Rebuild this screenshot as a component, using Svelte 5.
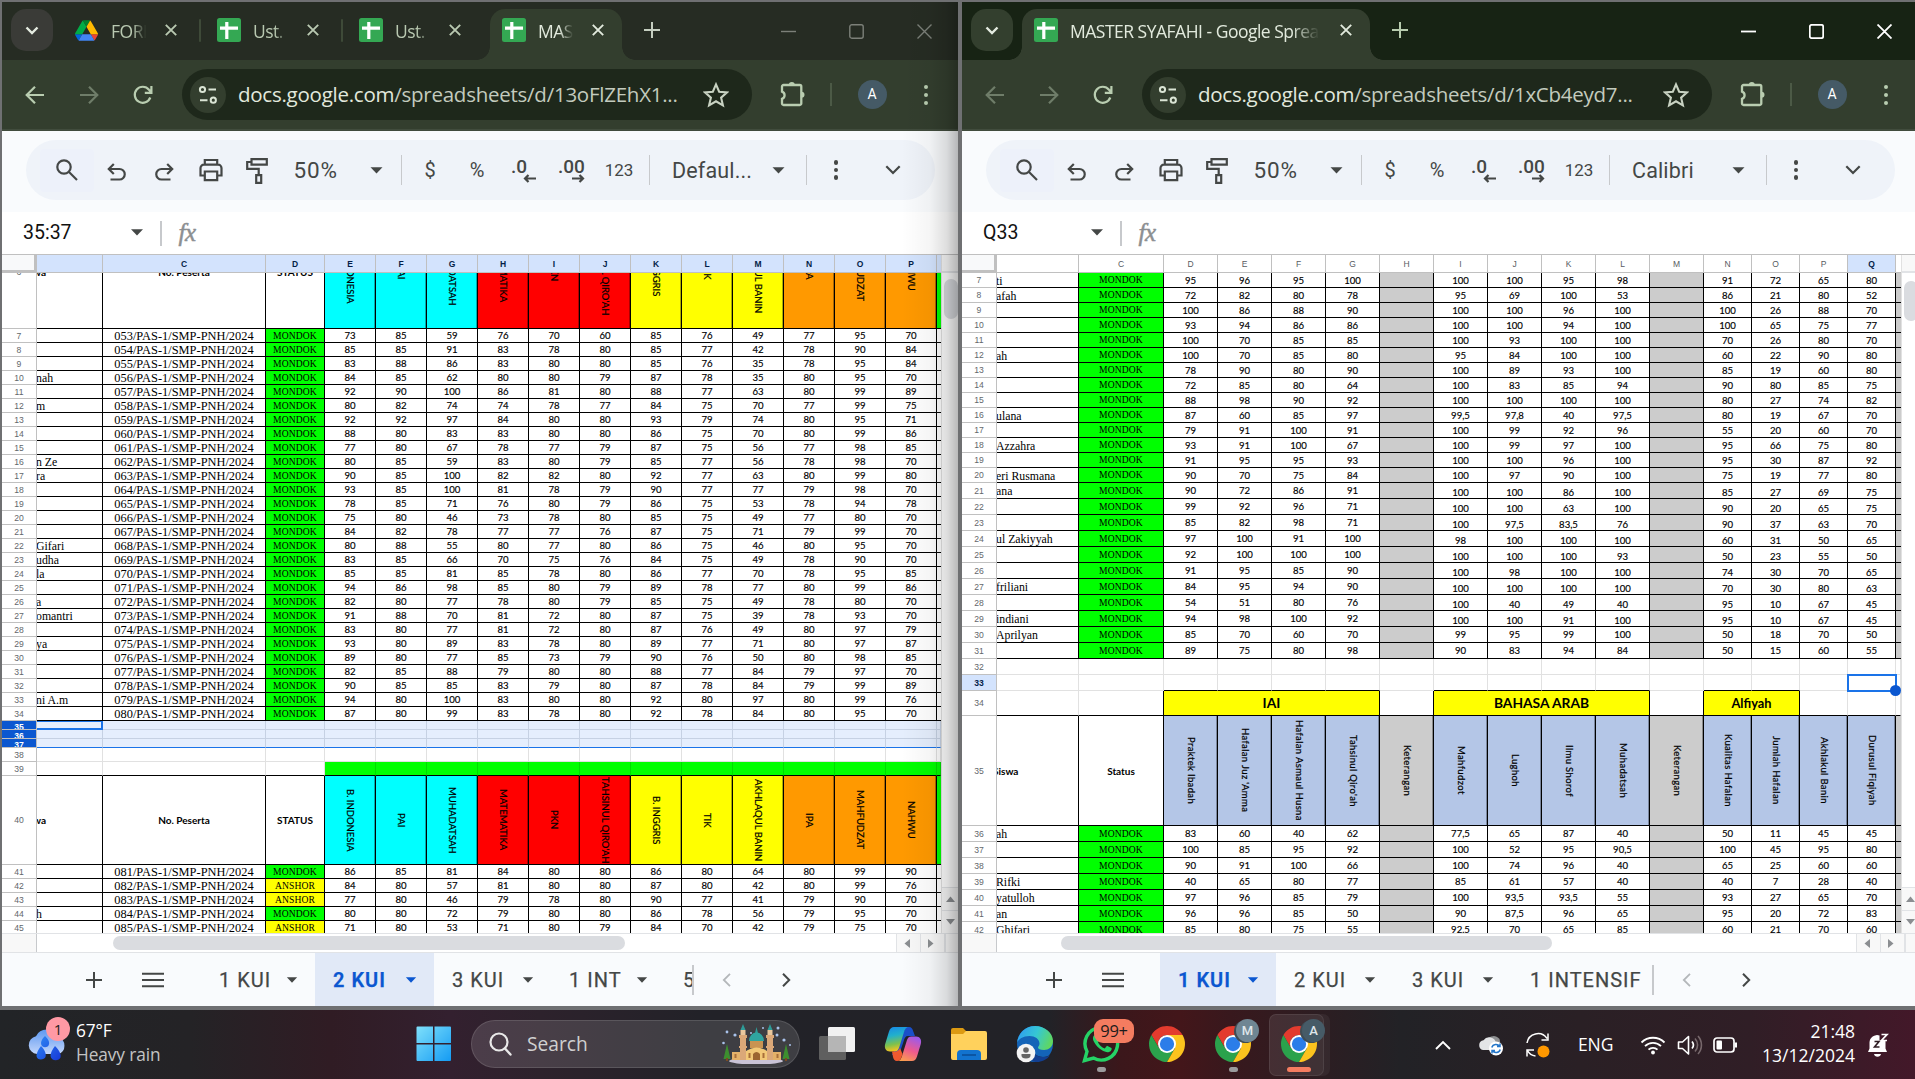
<script>
  const nums = (s) => s.trim().split(/\s+/);

  // Left spreadsheet: first row number, name tail, scores in columns E..P
  const leftRaw = `
7||73 85 59 76 70 60 85 76 49 77 95 70
8||85 85 91 83 78 80 85 77 42 78 90 84
9||83 88 86 83 80 80 85 76 35 78 95 84
10|nah|84 85 62 80 80 79 87 78 35 80 95 70
11||92 90 100 86 81 80 88 77 63 80 99 89
12|m|80 82 74 74 78 77 84 75 70 77 99 75
13||92 92 97 84 80 80 93 79 74 80 95 71
14||88 80 83 83 80 80 86 75 70 80 99 86
15||77 80 67 78 77 79 87 75 56 77 98 85
16|n Ze|80 85 59 83 80 79 85 77 56 78 98 70
17|ra|90 85 100 82 82 80 92 77 63 80 99 80
18||93 85 100 81 78 79 90 77 77 79 98 70
19||78 85 71 76 80 79 86 75 53 78 94 78
20||75 80 46 73 78 80 85 75 49 77 80 70
21||84 82 78 77 77 76 87 75 71 79 99 70
22|Gifari|80 88 55 80 77 80 86 75 46 80 95 70
23|udha|83 85 66 70 75 76 84 75 49 78 90 70
24|la|85 85 81 85 78 80 86 77 70 78 95 85
25||94 86 98 85 80 79 89 78 77 80 99 86
26|a|82 80 77 78 80 79 85 75 49 78 80 70
27|omantri|91 88 70 81 72 80 87 75 39 78 93 70
28||83 80 77 81 72 80 87 76 49 80 97 79
29|ya|93 80 89 83 78 80 89 77 71 80 97 87
30||89 80 77 85 73 79 90 76 50 80 98 85
31||82 85 88 79 80 80 88 77 84 79 97 70
32||90 85 85 83 79 80 87 78 84 79 99 89
33|ni A.m|94 80 100 83 80 80 92 80 97 80 99 76
34||87 80 99 83 78 80 92 78 84 80 95 70
41||86 85 81 84 80 80 86 80 64 80 99 90
42||84 80 57 81 80 80 87 80 42 80 99 76
43||77 80 46 79 78 80 90 77 41 79 90 70
44|h|80 80 72 79 80 80 86 78 56 79 95 70
45||71 80 53 71 80 79 84 70 42 79 75 70`;
  const left = leftRaw.trim().split('\n').map((l, i) => {
    const [n, name, v] = l.split('|');
    return {
      n: +n, name,
      id: `${String(53 + i).padStart(3, '0')}/PAS-1/SMP-PNH/2024`,
      status: [42, 43, 45].includes(+n) ? 'ANSHOR' : 'MONDOK',
      v: nums(v)
    };
  });
  const leftA = left.filter((r) => r.n < 35);
  const leftB = left.filter((r) => r.n > 40);

  const subjects = [
    ['B. INDONESIA', 'cyan'], ['PAI', 'cyan'], ['MUHADATSAH', 'cyan'],
    ['MATEMATIKA', 'red'], ['PKN', 'red'], ["TAHSINUL QIRO'AH", 'red'],
    ['B. INGGRIS', 'yellow'], ['TIK', 'yellow'], ['AKHLAQUL BANIN', 'yellow'],
    ['IPA', 'orange'], ['MAHFUDZAT', 'orange'], ['NAHWU', 'orange']
  ];

  // Right spreadsheet: D..G, blank H, I..L, blank M, N..Q
  const rightRaw = `
7|ti|95 96 95 100 - 100 100 95 98 - 91 72 65 80
8|afah|72 82 80 78 - 95 69 100 53 - 86 21 80 52
9||100 86 88 90 - 100 100 96 100 - 100 26 88 70
10||93 94 86 86 - 100 100 94 100 - 100 65 75 77
11||100 70 85 85 - 100 93 100 100 - 70 26 80 70
12|ah|100 70 85 80 - 95 84 100 100 - 60 22 90 80
13||78 90 80 90 - 100 89 93 100 - 85 19 60 80
14||72 85 80 64 - 100 83 85 94 - 90 80 85 75
15||88 98 90 92 - 100 100 100 100 - 80 27 74 82
16|ulana|87 60 85 97 - 99,5 97,8 40 97,5 - 80 19 67 70
17||79 91 100 91 - 100 99 92 96 - 55 20 60 70
18|Azzahra|93 91 100 67 - 100 99 97 100 - 95 66 75 80
19||91 95 95 93 - 100 100 96 100 - 95 30 87 92
20|eri Rusmana|90 70 75 84 - 100 97 90 100 - 75 19 77 80
21|ana|90 72 86 91 - 100 100 86 100 - 85 27 69 75
22||99 92 96 71 - 100 100 63 100 - 90 20 65 75
23||85 82 98 71 - 100 97,5 83,5 76 - 90 37 63 70
24|ul Zakiyyah|97 100 91 100 - 98 100 100 100 - 60 31 50 65
25||92 100 100 100 - 100 100 100 93 - 50 23 55 50
26||91 95 85 90 - 100 98 100 100 - 74 30 70 65
27|friliani|84 95 94 90 - 100 100 100 100 - 70 30 80 63
28||54 51 80 76 - 100 40 49 40 - 95 10 67 45
29|indiani|94 98 100 92 - 100 100 91 100 - 95 10 67 45
30|Aprilyan|85 70 60 70 - 99 95 99 100 - 50 18 70 50
31||89 75 80 98 - 90 83 94 84 - 50 15 60 55
36|ah|83 60 40 62 - 77,5 65 87 40 - 50 11 45 45
37||100 85 95 92 - 100 52 95 90,5 - 100 45 95 80
38||90 91 100 66 - 100 74 96 40 - 65 25 60 60
39|Rifki|40 65 80 77 - 85 61 57 40 - 40 7 28 40
40|yatulloh|97 96 85 79 - 100 93,5 93,5 55 - 93 27 65 70
41|an|96 96 85 50 - 90 87,5 96 65 - 95 20 72 83
42|Ghifari|85 80 75 55 - 92,5 70 65 85 - 60 21 70 60`;
  const right = rightRaw.trim().split('\n').map((l) => {
    const [n, name, v] = l.split('|');
    return { n: +n, name, v: nums(v) };
  });
  const rightA = right.filter((r) => r.n < 32);
  const rightB = right.filter((r) => r.n > 35);
  const topics = ['Praktek Ibadah', "Hafalan Juz 'Amma", 'Hafalan Asmaul Husna', "Tahsinul Qiro'ah", 'Keterangan',
    'Mahfudzot', 'Lughoh', 'Ilmu Shorof', 'Muhadatsah', 'Keterangan',
    'Kualitas Hafalan', 'Jumlah Hafalan', 'Akhlakul Banin', 'Durusul Fiqiyah'];

  const leftCols = ['', ...'CDEFGHIJKLMNOP', ''];
  const rightCols = ['', ...'CDEFGHIJKLMNOPQ', ''];
</script>

{#snippet sheetsIcon()}
  <svg class="fav" viewBox="0 0 24 24"><rect width="24" height="24" rx="2.5" fill="#34a853" /><path d="M9.8 4v17M3 10.200h18" stroke="#fff" stroke-width="3.200" fill="none" /></svg>
{/snippet}

{#snippet cross()}
  <svg class="x" viewBox="0 0 12 12"><path d="M.8.8l10.400 10.400M11.200.8L.8 11.200" stroke="currentColor" stroke-width="1.900" fill="none" /></svg>
{/snippet}

{#snippet tab(title, active = false)}
  <div class="tab" class:active>
    {#if title.startsWith('FOR')}
      <svg class="fav drive" viewBox="0 0 87.3 78"><path d="m6.600 66.850 3.850 6.650c.8 1.400 1.950 2.500 3.300 3.300l13.750-23.800h-27.500c0 1.550.4 3.100 1.200 4.500z" fill="#0066da" /><path d="m43.650 25-13.750-23.800c-1.350.8-2.500 1.900-3.300 3.300l-25.400 44a9.060 9.060 0 0 0-1.200 4.500h27.500z" fill="#00ac47" /><path d="m73.550 76.800c1.350-.8 2.500-1.900 3.300-3.300l1.600-2.750 7.650-13.250c.8-1.400 1.200-2.950 1.200-4.500h-27.502l5.852 11.500z" fill="#ea4335" /><path d="m43.650 25 13.750-23.800c-1.350-.8-2.900-1.200-4.500-1.200h-18.500c-1.600 0-3.150.45-4.500 1.200z" fill="#00832d" /><path d="m59.800 53h-32.300l-13.750 23.800c1.350.8 2.900 1.200 4.500 1.200h50.800c1.600 0 3.150-.45 4.500-1.200z" fill="#4285f4" /><path d="m73.400 26.500-12.700-22c-.8-1.400-1.950-2.500-3.300-3.300l-13.750 23.800 16.150 28h27.450c0-1.550-.4-3.100-1.200-4.500z" fill="#ffba00" /></svg>
    {:else}
      {@render sheetsIcon()}
    {/if}
    <span class="title">{title}</span>
    {@render cross()}
  </div>
{/snippet}

{#snippet caret()}
  <svg class="caret" viewBox="0 0 12 7"><path d="M0 .3h12L6 6.600z" fill="currentColor" /></svg>
{/snippet}

{#snippet chromeBar(url, canBack)}
  <div class="nav">
    <span class="nb" class:dim={!canBack}><svg width="20" height="20" viewBox="0 0 20 20"><path d="M19 10H2M10 1.700L1.700 10l8.300 8.300" /></svg></span>
    <span class="nb dim"><svg width="20" height="20" viewBox="0 0 20 20"><path d="M1 10h17M10 1.700l8.300 8.300-8.300 8.300" /></svg></span>
    <span class="nb"><svg width="20" height="20" viewBox="0 0 20 20"><path d="M17.300 12.500A8 8 0 1 1 16 4.700L18 7M18.400 1v6.800h-6.600" /></svg></span>
    <div class="omni">
      <span class="site"><svg width="20" height="20" viewBox="0 0 20 20"><circle cx="4.500" cy="4.500" r="2.600" /><path d="M10.500 4.500H18M2 15.200h7.500" /><circle cx="15.300" cy="15.200" r="2.600" /></svg></span>
      <span class="url"><b>docs.google.com</b>{url}</span>
      <svg class="star" viewBox="0 0 24 24"><path d="M12 2.200l2.900 6.800 7.300.6-5.500 4.800 1.700 7.200L12 17.800l-6.400 3.800 1.700-7.200L1.800 9.600l7.300-.6z" /></svg>
    </div>
    <span class="ext"><svg width="27" height="27" viewBox="0 0 27 27"><path d="M3 6.500a1.500 1.500 0 0 1 1.500-1.500h16.300a1.500 1.500 0 0 1 1.500 1.500V23.500a1.500 1.500 0 0 1-1.500 1.500H4.500A1.500 1.500 0 0 1 3 23.500V18.800a3.800 3.800 0 0 0 0-7.200z" fill="none" stroke="currentColor" stroke-width="2.300" /><path d="M9.800 5a3 3 0 0 1 6 0zM22.500 11.800a3 3 0 0 1 0 6z" fill="currentColor" /></svg></span>
    <span class="nsep"><i></i></span>
    <span class="av"><i>A</i></span>
    <span class="kebab"><i></i><i></i><i></i></span>
  </div>
{/snippet}

{#snippet toolbar(font, cellRef)}
  <div class="tools">
    <div class="pill">
      <span class="t find"><svg width="24" height="24" viewBox="0 0 24 24"><circle cx="9" cy="9" r="6.700" /><path d="M14 14l8 8" /></svg></span>
      <span class="t undo"><svg width="20" height="20" viewBox="0 0 20 20"><path d="M3.500 17.500h9a5 5 0 0 0 0-10.500H2M6.800 2L1.800 7l5 5" /></svg></span>
      <span class="t redo"><svg width="20" height="20" viewBox="0 0 20 20"><path d="M16.500 17.500h-9a5 5 0 0 1 0-10.500H18M13.200 2l5 5-5 5" /></svg></span>
      <span class="t print"><svg width="26" height="26" viewBox="0 0 26 26"><path d="M6.800 7.500V3h12.400v4.500M6.500 18.500H2.500V11A3.300 3.300 0 0 1 5.800 7.700h14.400a3.300 3.300 0 0 1 3.300 3.300v7.500h-4M6.800 14.500h12.400v8.700H6.800z" /></svg></span>
      <span class="t paint"><svg width="26" height="28" viewBox="0 0 26 28"><path d="M7.500 2.200h15.300v5.500H7.500zM7.500 5H3.200v6.800h11.500V18M12.200 18.200h5v7.600h-5z" /></svg></span>
      <span class="t zoomv">50%</span>
      <span class="t car">{@render caret()}</span>
      <span class="t s18"><i class="sep"></i></span>
      <span class="t dollar">$</span>
      <span class="t pct">%</span>
      <span class="t dec d1">.0<svg width="13" height="9" viewBox="0 0 13 9"><path d="M13 4.500H2M5.500 1L2 4.500 5.500 8" /></svg></span>
      <span class="t dec d2">.00<svg width="13" height="9" viewBox="0 0 13 9"><path d="M0 4.500h11M7.500 1L11 4.500 7.500 8" /></svg></span>
      <span class="t n123">123</span>
      <span class="t s22"><i class="sep"></i></span>
      <span class="t fontv">{font}</span>
      <span class="t car">{@render caret()}</span>
      <span class="t s25"><i class="sep"></i></span>
      <span class="t dots"><i></i><i></i><i></i></span>
      <span class="t chev"><svg width="16" height="10" viewBox="0 0 16 10"><path d="M1.300 1.300L8 8l6.700-6.700" /></svg></span>
    </div>
  </div>
  <div class="formula">
    <span class="ref">{cellRef}</span>
    {@render caret()}
    <i class="fsep"></i>
    <span class="fx">fx</span>
  </div>
{/snippet}

{#snippet side(end)}
  <div class="vbar" class:end>
    <div class="vtop"></div>
    <div class="thumb"></div>
    <div class="vbtn"><svg width="9" height="6" viewBox="0 0 9 6"><path d="M0 6L4.500.5 9 6z" fill="#8b8e91" /></svg></div>
    <div class="vbtn"><svg width="9" height="6" viewBox="0 0 9 6"><path d="M0 0h9L4.500 5.500z" fill="#8b8e91" /></svg></div>
  </div>
{/snippet}

{#snippet hbar(kind)}
  <div class="hbar">
    <div class="hcorner"></div>
    <div class="htrack"><div class="hthumb {kind}"></div></div>
    <div class="hbtn"><svg width="6" height="9" viewBox="0 0 6 9"><path d="M6 0v9L.5 4.500z" fill="#8b8e91" /></svg></div>
    <div class="hbtn"><svg width="6" height="9" viewBox="0 0 6 9"><path d="M0 0v9l5.500-4.500z" fill="#8b8e91" /></svg></div>
    <div class="hend"></div>
  </div>
{/snippet}

{#snippet stab(label, w, sel = false)}
  <div class="stab {w}" class:sel><span>{label}</span>{#if !w.startsWith('cut')}{@render caret()}{/if}</div>
{/snippet}

{#snippet tabsTools()}
  <span class="plus"><svg width="16" height="16" viewBox="0 0 16 16"><path d="M8 0v16M0 8h16" stroke="#444746" stroke-width="2" /></svg></span>
  <span class="burger"><svg width="22" height="16" viewBox="0 0 22 16"><path d="M0 1.700h22M0 8h22M0 14.300h22" stroke="#444746" stroke-width="2.100" /></svg></span>
{/snippet}

{#snippet tabsNav()}
  <i class="tsep"></i>
  <span class="tprev"><svg width="9" height="14" viewBox="0 0 9 14"><path d="M8 .8L1.800 7 8 13.200" stroke="#b4b7ba" stroke-width="1.800" fill="none" /></svg></span>
  <span class="tnext"><svg width="9" height="14" viewBox="0 0 9 14"><path d="M1 .8L7.200 7 1 13.200" stroke="#444746" stroke-width="2" fill="none" /></svg></span>
{/snippet}

{#snippet leftRow(r)}
  <div class="row r14">
    <div class="rh">{r.n}</div>
    <div class="c name">{r.name}</div>
    <div class="c id">{r.id}</div>
    <div class="c st {r.status === 'ANSHOR' ? 'yellow' : 'green'}">{r.status}</div>
    {#each r.v as v}<div class="c num">{v}</div>{/each}
    <div class="c last"></div>
  </div>
{/snippet}

{#snippet leftHead(n, kind)}
  <div class="row {kind}">
    <div class="rh"><span class="deep">{n}</span></div>
    <div class="c hn"><span class="deep">wa</span></div>
    <div class="c hb"><span class="deep">No. Peserta</span></div>
    <div class="c hb"><span class="deep">STATUS</span></div>
    {#each subjects as [s, color]}<div class="c vert {color}"><span class="deep"><em>{s}</em></span></div>{/each}
    <div class="c last green"></div>
  </div>
{/snippet}

{#snippet rightRow(r)}
  <div class="row {r.n < 21 ? 'r15' : 'r16'}" class:low={r.n > 20 && r.n < 30}>
    <div class="rh">{r.n}</div>
    <div class="c name">{r.name}</div>
    <div class="c st green">MONDOK</div>
    {#each r.v as v, i}<div class="c num" class:gray={v === '-'} class:dn={i > 4}>{v === '-' ? '' : v}</div>{/each}
    <div class="c last gray"></div>
  </div>
{/snippet}

{#snippet chromeLogo()}
  <svg class="logo" viewBox="0 0 48 48"><path d="M24 12H44.780A24 24 0 0 0 3.220 12L13.600 30A12 12 0 0 1 24 12z" fill="#e33b2e" /><path d="M13.600 30L3.220 12A24 24 0 0 0 24 48L34.390 30z" fill="#2ba24c" /><path d="M34.390 30L24 48A24 24 0 0 0 44.780 12H24z" fill="#fcc31e" /><circle cx="24" cy="24" r="12" fill="#fff" /><circle cx="24" cy="24" r="9.500" fill="#2b7de9" /></svg>
{/snippet}

<div class="desktop">
  <div class="windows">
    <div class="win w1">
      <div class="strip">
        <span class="tabsearch"><svg width="14" height="9" viewBox="0 0 14 9"><path d="M1.500 1.500L7 7l5.500-5.500" /></svg></span>
        {@render tab('FORM')}
        <i class="ts"></i>
        {@render tab('Ust. I')}
        <i class="ts"></i>
        {@render tab('Ust. I')}
        {@render tab('MAST', true)}
        <svg class="newtab" viewBox="0 0 16 16"><path d="M8 0v16M0 8h16" stroke="currentColor" stroke-width="2" /></svg>
        <div class="ctl">
          <span><svg width="15" height="15" viewBox="0 0 15 15"><path d="M0 7.500h15" /></svg></span>
          <span><svg width="15" height="15" viewBox="0 0 15 15"><rect x=".8" y=".8" width="13.400" height="13.400" rx="2" /></svg></span>
          <span><svg width="15" height="15" viewBox="0 0 15 15"><path d="M.5.5l14 14M14.500.5l-14 14" /></svg></span>
        </div>
      </div>
      {@render chromeBar('/spreadsheets/d/13oFlZEhX1...', true)}
      {@render toolbar('Defaul...', '35:37')}
      <div class="body">
        <div class="grid left">
          <div class="row colhead on">
            <div class="corner"></div>
            {#each leftCols as c}<div class="ch">{c}</div>{/each}
          </div>
          {@render leftHead(6, 'h6')}
          {#each leftA as r}{@render leftRow(r)}{/each}
          {#each [35, 36, 37] as n}
            <div class="row selrow" class:l37={n === 37}>
              <div class="rh"><span>{n}</span></div>
              <div class="c lt" class:cursor={n === 35}></div>
              {#each Array(15) as _}<div class="c lt"></div>{/each}
            </div>
          {/each}
          <div class="row r14"><div class="rh">38</div>{#each Array(16) as _}<div class="c lt"></div>{/each}</div>
          <div class="row r14 r39"><div class="rh">39</div>{#each Array(16) as _, i}<div class="c lt" class:green={i > 2}></div>{/each}</div>
          {@render leftHead(40, 'h40')}
          {#each leftB as r}{@render leftRow(r)}{/each}
        </div>
        {@render side(false)}
      </div>
      {@render hbar('a')}
      <div class="stabs">
        {@render tabsTools()}
        {@render stab('1 KUI', 'l1')}
        {@render stab('2 KUI', 'l2', true)}
        {@render stab('3 KUI', 'l3')}
        {@render stab('1 INT', 'l4')}
        {@render stab('5', 'cut')}
        {@render tabsNav()}
      </div>
      <div class="cast"></div>
    </div>

    <div class="win w2">
      <div class="strip">
        <span class="tabsearch"><svg width="14" height="9" viewBox="0 0 14 9"><path d="M1.500 1.500L7 7l5.500-5.500" /></svg></span>
        {@render tab('MASTER SYAFAHI - Google Spreadsheet', true)}
        <svg class="newtab" viewBox="0 0 16 16"><path d="M8 0v16M0 8h16" stroke="currentColor" stroke-width="2" /></svg>
        <div class="ctl">
          <span><svg width="15" height="15" viewBox="0 0 15 15"><path d="M0 7.500h15" /></svg></span>
          <span><svg width="15" height="15" viewBox="0 0 15 15"><rect x=".8" y=".8" width="13.400" height="13.400" rx="2" /></svg></span>
          <span><svg width="15" height="15" viewBox="0 0 15 15"><path d="M.5.5l14 14M14.500.5l-14 14" /></svg></span>
        </div>
      </div>
      {@render chromeBar('/spreadsheets/d/1xCb4eyd7...', false)}
      {@render toolbar('Calibri', 'Q33')}
      <div class="body">
        <div class="grid right">
          <div class="row colhead">
            <div class="corner"></div>
            {#each rightCols as c}<div class="ch" class:selc={c === 'Q'}>{c}</div>{/each}
          </div>
          {#each rightA as r}{@render rightRow(r)}{/each}
          <div class="row r16"><div class="rh">32</div>{#each Array(17) as _}<div class="c lt"></div>{/each}</div>
          <div class="row r16"><div class="rh rsel">33</div>{#each Array(17) as _, i}<div class="c lt" class:before={(i > 1 && i < 6) || (i > 6 && i < 11) || i === 12 || i === 13} class:q33={i === 15}></div>{/each}</div>
          <div class="row r34">
            <div class="rh">34</div>
            <div class="c lt bb"></div><div class="c lt bb rb"></div>
            <div class="c merge m4">IAI</div>
            <div class="c bb rb"></div>
            <div class="c merge m4">BAHASA ARAB</div>
            <div class="c bb rb"></div>
            <div class="c merge m2">Alfiyah</div>
            <div class="c lt bb"></div><div class="c lt bb"></div><div class="c lt bb"></div>
          </div>
          <div class="row r35">
            <div class="rh">35</div>
            <div class="c hn"><span>Siswa</span></div>
            <div class="c hb"><span>Status</span></div>
            {#each topics as s}<div class="c vert {s === 'Keterangan' ? 'gray' : 'blue'}"><em>{s}</em></div>{/each}
            <div class="c last gray"></div>
          </div>
          {#each rightB as r}{@render rightRow(r)}{/each}
        </div>
        {@render side(true)}
      </div>
      {@render hbar('b')}
      <div class="stabs">
        {@render tabsTools()}
        {@render stab('1 KUI', 'q1', true)}
        {@render stab('2 KUI', 'q2')}
        {@render stab('3 KUI', 'q3')}
        {@render stab('1 INTENSIF', 'cut wide')}
        {@render tabsNav()}
      </div>
    </div>
  </div>

  <div class="taskbar">
    <div class="weather">
      <span class="wicon">
        <svg width="40" height="44" viewBox="0 0 40 44">
          <defs><linearGradient id="cl" x1="0" y1="0" x2="0" y2="1"><stop offset="0" stop-color="#5d98f0" /><stop offset="1" stop-color="#c3d6fb" /></linearGradient><linearGradient id="dr" x1="0" y1="0" x2="1" y2="1"><stop offset="0" stop-color="#2f8af5" /><stop offset="1" stop-color="#1638d8" /></linearGradient></defs>
          <path d="M10 35a9 9 0 0 1-1-17.800A12 12 0 0 1 31 18.500 8.500 8.500 0 0 1 31 35z" fill="url(#cl)" />
          <path d="M18 17c4 4 5 7 3.500 9.500S14 29 14 24c0-2.500 2-5 4-7zM14 27c4 4 5.500 8 4.500 11s-8.500 4-9-1c0-3 2-7 4.500-10zM28 27c4 4 6.500 8 5.500 11.500s-9.500 4-10-1.500c0-3 2-7 4.500-10z" fill="url(#dr)" />
        </svg>
        <b>1</b>
      </span>
      <span class="wtext"><span>67°F</span><span class="sub">Heavy rain</span></span>
    </div>
    <div class="apps">
      <span class="app start"><svg width="36" height="36" viewBox="0 0 36 36"><defs><linearGradient id="wn" x1="0" y1="0" x2="1" y2="1"><stop offset="0" stop-color="#7fe0fb" /><stop offset="1" stop-color="#149bf3" /></linearGradient></defs><path d="M1.500 0.500H17V17H.5V1.500a1 1 0 0 1 1-1zM18.500.5H34a1 1 0 0 1 1 1V17H18.500zM.5 18.500H17V35H1.500a1 1 0 0 1-1-1zM18.500 18.500H35V34a1 1 0 0 1-1 1H18.500z" fill="url(#wn)" /></svg></span>
      <span class="search">
        <svg width="24" height="24" viewBox="0 0 24 24"><circle cx="10" cy="10" r="8.500" fill="none" stroke="#e8e8e8" stroke-width="2.200" /><path d="M16 16.500l5.500 6" stroke="#e8e8e8" stroke-width="2.400" stroke-linecap="round" /></svg>
        <span>Search</span>
        <svg class="mosque" width="70" height="40" viewBox="0 0 70 40">
          <ellipse cx="34" cy="37" rx="27" ry="3.500" fill="#c9c3d6" />
          <path d="M18 14h6v22h-6zM45 14h6v22h-6zM17 11h8v3h-8zM44 11h8v3h-8zM17 22h8v2h-8zM44 22h8v2h-8z" fill="#dba878" />
          <path d="M18.500 6h5v5h-5zM45.500 6h5v5h-5z" fill="#e9c79d" />
          <path d="M21 0l2.500 6h-5zM48 0l2.500 6h-5zM34.500 3l1.500 6h-3z" fill="#2f9b97" />
          <path d="M27 17a7.500 8.500 0 0 1 15 0z" fill="#2fa5a0" />
          <path d="M28 17h13v7H28z" fill="#c99352" />
          <path d="M24 27q10-7 21 0v9H24z" fill="#f2c877" />
          <path d="M10 28h8v8h-8zM51 28h8v8h-8z" fill="#e4b169" />
          <path d="M31 36v-6q3.500-4 7 0v6z" fill="#9c6530" /><path d="M26.500 34v-5h2v5zM40.500 34v-5h2v5zM12.500 34v-4h2v4zM54.500 34v-4h2v4z" fill="#a86f3a" />
          <path d="M5 20l3.500 15h-7zM64 20l3.500 15h-7z" fill="#3d8f2f" /><path d="M4 34h2v3H4zM63 34h2v3h-2z" fill="#7a4b23" />
          <g fill="#a9c2ea"><circle cx="5" cy="8" r="1.400" /><circle cx="13" cy="11" r="1.600" /><circle cx="1.500" cy="19" r="1.300" /><circle cx="56" cy="4" r="1.500" /><circle cx="55" cy="11" r="1.500" /><circle cx="62" cy="16" r="1.600" /><circle cx="41" cy="4" r="1" /><circle cx="29" cy="9" r="1" /><circle cx="68" cy="21" r="1" /></g>
        </svg>
      </span>
      <span class="app"><svg width="36" height="34" viewBox="0 0 36 34"><rect y="9" width="27" height="24" rx="1.500" fill="#5f5f5f" /><rect x="9" y="0" width="27" height="25" rx="1.500" fill="#f1f1f1" /><rect x="9" y="9" width="18" height="16" fill="#b5b5b5" /></svg></span>
      <span class="app"><svg width="38" height="36" viewBox="0 0 38 36">
        <defs><linearGradient id="c1" x1="0" y1="0" x2=".2" y2="1"><stop offset="0" stop-color="#1787e8" /><stop offset=".4" stop-color="#21b0cc" /><stop offset=".75" stop-color="#7fc14c" /><stop offset="1" stop-color="#f2c321" /></linearGradient><linearGradient id="c2" x1=".6" y1="0" x2=".2" y2="1"><stop offset="0" stop-color="#a05ae6" /><stop offset=".5" stop-color="#ee5a8e" /><stop offset="1" stop-color="#fba14b" /></linearGradient></defs>
        <path d="M22 1h3c2.500 0 3.500 2 4.200 4.200L31 10h-7c-2.500 0-3.500 2-4.300 5L16 26c-.8 2-2 3-4.500 3H8z" fill="#1a4fc9" />
        <path d="M10 1h15c-3 0-4 2-5 5l-5 16c-1 2.500-2 3.500-4.500 3.500H6C2 25.500 0 22 1.200 18L5 5.500C6 2.500 7.500 1 10 1z" fill="url(#c1)" />
        <path d="M28 35H13c3 0 4-2 5-5l5-16c1-2.500 2-3.500 4.500-3.500H32c4 0 6 3.500 4.800 7.500L33 30.500C32 33.500 30.500 35 28 35z" fill="url(#c2)" />
        <path d="M8 25.500h3.500c2 0 3.500-1.500 4.500-3.500l2.500 6-1 3c-1 2.500-2 4-4.500 4s-3.500-2-4-4z" fill="#f0592f" />
      </svg></span>
      <span class="app"><svg width="36" height="34" viewBox="0 0 36 34"><path d="M0 3a2 2 0 0 1 2-2h10l4 4h6v6H0z" fill="#dc9a12" /><path d="M0 7h12l3-3h19a2 2 0 0 1 2 2v25a2 2 0 0 1-2 2H2a2 2 0 0 1-2-2z" fill="#ffd15c" /><path d="M6 33v-6a4 4 0 0 1 4-4h16a4 4 0 0 1 4 4v6z" fill="#1273cf" /><path d="M11 28h14" stroke="#0b4f98" stroke-width="1.600" /></svg></span>
      <span class="app"><svg width="38" height="38" viewBox="0 0 38 38">
        <defs><linearGradient id="e1" x1="0" y1=".3" x2="1" y2=".6"><stop offset="0" stop-color="#2f9df0" /><stop offset=".5" stop-color="#35c7d4" /><stop offset="1" stop-color="#62d85a" /></linearGradient></defs>
        <circle cx="19" cy="19" r="18" fill="#1464b8" />
        <path d="M1 18C2 8 9.500 1 19 1c10 0 18 7 18 15 0 6-4.500 9-9 9-4 0-6-1.200-6-2.500 0-1 1.500-1.500 1.500-4C23.500 14 19 11 13.500 11 7 11 2.500 14 1 18z" fill="url(#e1)" />
        <path d="M16 23c0 5 5 9 11 9 3.500 0 6-1 8-2.500 2-2 1-5 3-4v12H24z" fill="#222228" /><path d="M15 20c0 8 6 12 12 12 2.500 0 5-.5 7-1.800C31 34.500 26 37 20 37c-7 0-9-12-5-17z" fill="#123f91" />
        <circle cx="10" cy="28" r="9.300" fill="#f4f4f4" /><circle cx="10" cy="25" r="2.800" fill="#666" /><path d="M5.500 29h9v1.500q0 3-4.500 3t-4.500-3z" fill="#666" />
      </svg></span>
      <span class="app wa"><svg width="38" height="38" viewBox="0 0 38 38"><path d="M2.500 35.500L5 26.500A16.300 16.300 0 1 1 11.500 33z" fill="none" stroke="#25d366" stroke-width="3.400" /><path d="M12.500 10c-2.500 2-2 5.500 1.500 10s9.500 8 13 7c2.500-.8 3-3 2.500-4l-4.500-2.200-2.300 2.700c-3-1-5.500-3.500-6.700-6.200l2-2.300-2-5z" fill="#25d366" /></svg><b>99+</b><i class="ind"></i></span>
      <span class="app">{@render chromeLogo()}</span>
      <span class="app">{@render chromeLogo()}<b class="who m">M</b><i class="ind"></i></span>
      <span class="app cur">{@render chromeLogo()}<b class="who a">A</b><i class="ind hot"></i></span>
    </div>
    <div class="tray">
      <svg class="up" width="16" height="10" viewBox="0 0 16 10"><path d="M1 9l7-7 7 7" fill="none" stroke="#fff" stroke-width="1.900" /></svg>
      <svg class="cloud" width="26" height="22" viewBox="0 0 26 22"><path d="M9 6a7.500 7.500 0 0 1 12.500-1L23 12H9z" fill="#8f9193" /><path d="M5 16a5 5 0 0 1 .5-9.800A7 7 0 0 1 18 9v7z" fill="#e3e5e7" /><circle cx="18" cy="14.500" r="7" fill="#fff" /><path d="M13.800 13.500a4.300 4.300 0 0 1 7.800-1M22.200 15.500a4.300 4.300 0 0 1-7.800 1M22 9.500v3h-3M14 19.500v-3h3" fill="none" stroke="#2376c9" stroke-width="1.500" /></svg>
      <svg class="sync" width="26" height="26" viewBox="0 0 26 26"><path d="M2 11A11 11 0 0 1 22 6.500M23 1.500v6.500h-6.500M2 24.500V18h7M2.500 18.500a10 10 0 0 0 8 5.500" fill="none" stroke="#fff" stroke-width="1.500" /><circle cx="18.500" cy="19.500" r="6" fill="#ff9800" /></svg>
      <span class="eng">ENG</span>
      <svg class="wifi" width="26" height="20" viewBox="0 0 26 20"><path d="M1.500 7.500a16.300 16.300 0 0 1 23 0M5 11.200a11.300 11.300 0 0 1 16 0M8.500 14.700a6.400 6.400 0 0 1 9 0" fill="none" stroke="#fff" stroke-width="1.800" /><circle cx="13" cy="17.500" r="1.900" fill="#fff" /></svg>
      <svg class="vol" width="26" height="22" viewBox="0 0 26 22"><path d="M1.500 8v6.500h4l6 5.500V2.500L5.500 8z" fill="none" stroke="#fff" stroke-width="1.600" stroke-linejoin="round" /><path d="M15 7.500a5.500 5.500 0 0 1 0 7" fill="none" stroke="#fff" stroke-width="1.700" /><path d="M18 4.500a9.500 9.500 0 0 1 0 13M21 2a13.500 13.500 0 0 1 0 18" fill="none" stroke="#77686c" stroke-width="1.600" /></svg>
      <svg class="bat" width="25" height="16" viewBox="0 0 25 16"><rect x="1" y="1" width="20" height="14" rx="3" fill="none" stroke="#fff" stroke-width="1.700" /><rect x="3.500" y="3.500" width="5.500" height="9" rx="1" fill="#fff" /><path d="M22.800 5.500v5" stroke="#fff" stroke-width="2.400" /></svg>
      <span class="clock"><span>21:48</span><span>13/12/2024</span></span>
      <svg class="bell" width="22" height="24" viewBox="0 0 22 24"><path d="M1 19l1.500-3.500V9.500a7.500 7.500 0 0 1 10-7v5h6v8L20 19zM7 21h7a3.600 3.600 0 0 1-7 0z" fill="#fff" /><path d="M7.500 8.500h4.500L7.500 14h5" fill="none" stroke="#2e1c22" stroke-width="1.600" /><path d="M14.500 1.500h5.500l-5.500 6h5.500" fill="none" stroke="#fff" stroke-width="1.700" /></svg>
    </div>
  </div>
</div>

<style>
  :global(body) { background: #6f7072; overflow: hidden; }
  .desktop { width: 1915px; height: 1079px; overflow: hidden; background: #6f7072; font-family: 'Open Sans', 'Noto Sans', sans-serif; }
  .desktop * { box-sizing: border-box; }
  .desktop svg { flex: none; display: block; }
  .windows { display: flex; gap: 4px; padding: 2px 0 0 2px; height: 1010px; }
  .win { position: relative; width: 956px; height: 1004px; overflow: hidden; flex: none; background: #fff; }
  .w2 { width: 953px; }
  .cast { position: absolute; top: 0; right: 0; width: 56px; height: 100%; background: linear-gradient(to right, transparent, rgba(0, 0, 0, 0.04) 50%, rgba(0, 0, 0, 0.13) 80%, rgba(0, 0, 0, 0.27)); }

  /* browser frame */
  .strip { display: flex; width: 956px; height: 58px; padding: 7px 0 0 9px; background: #262c23; color: #b9c9b1; }
  .w2 .strip { background: #172314; }
  .tabsearch { width: 42px; height: 42px; border-radius: 15px; background: #3a3b37; display: flex; align-items: center; justify-content: center; margin-right: 5px; }
  .w2 .tabsearch { background: #333f2e; margin-right: 9px; }
  .tabsearch path { fill: none; stroke: #e4ebe0; stroke-width: 2.4; }
  .tab { display: flex; width: 141px; height: 51px; padding: 0 0 9px 17px; align-items: center; }
  .tab .fav { width: 24px; height: 24px; margin-right: 12px; }
  .tab .drive { width: 23px; height: 21px; margin-right: 13px; }
  .title { width: 36px; overflow: hidden; white-space: nowrap; font-size: 17.500px; letter-spacing: -0.5px; line-height: 24px; padding-top: 2px; mask-image: linear-gradient(to right, #000 60%, transparent 98%); }
  .tab .x { width: 12px; height: 12px; margin-left: 18px; margin-bottom: 1px; }
  .ts { width: 2px; height: 23px; margin: 10px -1px 0 0; background: #3e4a38; border-radius: 1px; }
  .tab.active { position: relative; background: #333e2e; width: 132px; padding-left: 12px; border-radius: 15px 15px 0 0; margin-left: 7px; color: #e2eadd; }
  .tab.active::before, .tab.active::after { content: ''; position: absolute; bottom: 0; width: 13px; height: 13px; }
  .tab.active::before { left: -13px; background: radial-gradient(circle at 0 0, transparent 12.5px, #333e2e 13px); }
  .tab.active::after { right: -13px; background: radial-gradient(circle at 100% 0, transparent 12.5px, #333e2e 13px); }
  .w2 .tab.active { width: 348px; margin-left: 0; }
  .w2 .title { width: 252px; mask-image: linear-gradient(to right, #000 88%, transparent 99%); }
  .w2 .tab .x { margin-left: 18px; }
  .newtab { width: 16px; height: 16px; margin: 13px 0 0 22px; color: #c5cec0; }
  .w2 .newtab { color: #b7cbae; }
  .ctl { display: flex; margin: -7px 0 0 auto; height: 58px; }
  .ctl span { width: 68px; display: flex; justify-content: center; align-items: center; }
  .ctl svg { fill: none; stroke: #7c8079; stroke-width: 1.4; }
  .w2 .ctl svg { stroke: #fff; stroke-width: 1.8; }
  .nav { display: flex; align-items: center; width: 956px; height: 71px; padding-left: 6px; background: #333e2e; border-bottom: 2px solid #414c3d; color: #b9cdb0; }
  .nb { width: 54px; display: flex; justify-content: center; }
  .nb svg { fill: none; stroke: currentColor; stroke-width: 2.2; }
  .dim { color: #6f7d69; }
  .omni { display: flex; align-items: center; width: 570px; height: 51px; margin-left: 12px; padding: 0 21px 0 8px; border-radius: 26px; background: #1e281b; color: #c3cbbe; }
  .site { width: 36px; height: 36px; border-radius: 50%; background: #333e2e; display: flex; align-items: center; justify-content: center; }
  .site svg { fill: none; stroke: #dbe5d5; stroke-width: 2; }
  .url { margin-left: 12px; margin-top: -2px; font-size: 20.5px; letter-spacing: -0.25px; white-space: nowrap; }
  .url b { font-weight: 400; color: #e2e9dd; }
  .star { width: 26px; height: 26px; margin-left: auto; margin-right: 2px; fill: none; stroke: #c8d2c2; stroke-width: 1.9; }
  .ext { width: 41px; margin-left: 20px; display: flex; justify-content: center; padding-bottom: 2px; }
  .nsep { width: 36px; display: flex; justify-content: center; }
  .nsep i { width: 2px; height: 23px; background: #4c5a46; }
  .av { width: 46px; display: flex; justify-content: center; }
  .av i { width: 29px; height: 29px; border-radius: 50%; background: #455a66; color: #fff; font: normal 14px/29px Roboto, sans-serif; text-align: center; }
  .kebab { width: 62px; display: flex; flex-direction: column; align-items: center; gap: 4px; }
  .kebab i { width: 4px; height: 4px; border-radius: 50%; background: #b9cdb0; }

  /* sheet toolbar */
  .tools { width: 956px; height: 81px; padding: 9px 0 0 24px; background: #f9fbfd; }
  .pill { display: flex; align-items: center; width: 909px; height: 60px; border-radius: 30px; background: #eff3f9; padding-left: 14px; color: #444746; font-family: Roboto, sans-serif; }
  .t { display: flex; align-items: center; justify-content: center; height: 60px; flex: none; }
  .t svg { fill: none; stroke: #444746; stroke-width: 2.2; }
  .t .caret { width: 13px; height: 7px; stroke: none; }
  .find { width: 54px; height: 43px; background: #edf1fa; border-radius: 4px; }
  .undo { width: 46.5px; }
  .redo, .print { width: 47px; }
  .undo svg, .redo svg { margin-top: 4px; }
  .paint { width: 45px; padding-top: 2px; }
  .zoomv { width: 80.5px; padding-left: 14px; justify-content: flex-start; font-size: 22.5px; letter-spacing: 0.8px; }
  .car { width: 32px; }
  .s18 { width: 18px; } .s22 { width: 22px; } .s25 { width: 25px; }
  .sep { width: 1px; height: 30px; background: #c7c9cc; }
  .dollar { width: 40px; font-size: 20px; }
  .pct { width: 54px; font-size: 20px; }
  .dec { font-size: 19px; font-weight: 500; position: relative; padding-bottom: 8px; }
  .dec svg { position: absolute; top: 34px; }
  .d1 { width: 38px; justify-content: flex-start; padding-left: 7px; } .d1 svg { left: 19px; }
  .d2 { width: 58px; justify-content: flex-start; padding-left: 16px; } .d2 svg { left: 30px; }
  .n123 { width: 38px; font-size: 17px; }
  .fontv { width: 102px; padding-left: 12px; justify-content: flex-start; font-size: 21.5px; letter-spacing: 0.15px; }
  .dots { width: 34px; flex-direction: column; gap: 3.2px; }
  .dots i { width: 4.400px; height: 4.400px; border-radius: 50%; background: #444746; }
  .chev { width: 80px; }
  .formula { display: flex; align-items: center; width: 956px; height: 43px; padding-left: 21px; border-bottom: 1px solid #c0c0c0; color: #444746; font-family: Roboto, sans-serif; }
  .ref { width: 108px; font-size: 19.5px; color: #111; padding-bottom: 2px; }
  .formula .caret { width: 12px; height: 7px; margin-bottom: 1px; }
  .fsep { width: 1.500px; height: 25px; margin: 0 17px 0 17px; background: #c7c9cc; }
  .fx { font: italic 25px 'Liberation Serif', serif; color: #8c8f92; letter-spacing: -0.5px; -webkit-text-stroke: 0.5px #8c8f92; }

  /* grid */
  .body { display: flex; width: 956px; height: 678px; overflow: hidden; }
  .grid { width: 939px; flex: none; overflow: hidden; color: #000; font-family: Lato, sans-serif; }
  .row { display: grid; width: 939px; overflow: hidden; }
  .left .row { grid-template-columns: 35px 66px 163px 59px repeat(12, 51px) 4px; }
  .right .row { grid-template-columns: 35px 82px 85px repeat(10, 54px) repeat(4, 48px) 5px; }
  .colhead { height: 18px; font: 8.500px 'Liberation Sans', sans-serif; color: #575b5f; }
  .ch { border: solid #c0c0c0; border-width: 0 1px 1px 0; display: flex; align-items: center; justify-content: center; }
  .ch:last-child { border-right: 0; }
  .on .ch, .selc { background: #d3e3fd; color: #041e49; font-weight: 700; }
  .corner { background: #f8f9fa; border: solid #c0c0c0; border-width: 0 3px 3px 0; }
  .r14 { height: 14px; } .r15 { height: 15px; } .r16 { height: 16px; }
  .rh { display: flex; align-items: center; justify-content: center; border: solid #c0c0c0; border-width: 0 1px 1px 0; font: 8.600px 'Liberation Sans', sans-serif; color: #63676b; overflow: hidden; }
  .c { display: flex; align-items: center; justify-content: center; border: solid #000; border-width: 0 1px 1px 0; overflow: hidden; white-space: nowrap; line-height: 12px; min-width: 0; }
  .last { border-right: 0; }
  .lt { border-color: #e1e1e1; }
  .num { font-size: 9.600px; padding-top: 1px; -webkit-text-stroke: 0.15px #000; }
  .low .dn { padding-top: 4px; }
  .name { justify-content: flex-start; font: 11.800px/12px 'Liberation Serif', serif; text-indent: -1px; padding-top: 1px; }
  .id { font: 12.400px/13px 'Liberation Serif', serif; padding-top: 1px; }
  .st { font: 9.600px/12px 'Liberation Serif', serif; letter-spacing: 0.1px; }
  .green { background: #0f0; } .yellow { background: #ff0; } .cyan { background: #0ff; } .red { background: #f00; }
  .orange { background: #f90; } .gray { background: #ccc; } .blue { background: #b4c6e7; }
  .h6 { height: 56px; } .h40 { height: 89px; }
  .deep { display: flex; align-items: center; justify-content: center; }
  .h6 .rh, .h6 .c { align-items: flex-end; }
  .h6 .deep { height: 112px; flex: none; }
  .hb, .hn { font-size: 10px; font-weight: 700; }
  .hn { justify-content: flex-start; }
  .hn span { margin-left: -4px; }
  .vert { box-shadow: inset -1px 0 rgba(0, 0, 0, 0.32); }
  .vert em { writing-mode: vertical-rl; font-style: normal; font-size: 9.500px; -webkit-text-stroke: 0.2px #000; }
  .right .vert em { letter-spacing: 0.35px; }
  .selrow { height: 9px; }
  .selrow .c { background: #e5eefd; border-color: #c6d1e3; }
  .selrow .rh { background: #0b57d0; color: #fff; font-weight: 700; align-items: flex-start; line-height: 11px; padding-top: 1px; }
  .l37 .c { border-bottom: 1px solid #1a73e8; }
  .selrow .cursor { border: solid #1a73e8; border-width: 1px 2px 2px 0; }
  .r39 .c { border-bottom-color: #000; }
  .r39 .green { border-right-color: #00dc00; }
  .right .rsel { background: #d3e3fd; color: #041e49; font-weight: 700; }
  .before { border-bottom-color: #000; }
  .q33 { position: relative; overflow: visible; border: 0; outline: 2px solid #1a73e8; outline-offset: -1px; z-index: 1; }
  .q33::after { content: ''; position: absolute; right: -5px; bottom: -5px; width: 11px; height: 11px; border-radius: 50%; background: #0b57d0; }
  .right .row:has(.q33) { overflow: visible; position: relative; z-index: 1; }
  .r34 { height: 25px; } .r35 { height: 110px; }
  .bb { border-bottom-color: #000; } .rb { border-right-color: #000; }
  .merge { background: #ff0; font-size: 13.800px; font-weight: 700; }
  .m4 { grid-column: span 4; } .m2 { grid-column: span 2; font-size: 12.800px; }

  .vbar { width: 17px; border-left: 1px solid #e1e1e1; display: flex; flex-direction: column; background: #fff; }
  .vtop { height: 18px; background: #f8f8f8; border-bottom: 2px solid #e1e3e6; flex: none; }
  .thumb { width: 14px; height: 40px; margin: 6px 0 auto 2px; border-radius: 7px; background: #dadce0; flex: none; }
  .end .thumb { margin-top: 8px; }
  .vbtn { height: 23px; border-top: 1px solid #e1e3e6; background: #f8f8f8; display: flex; align-items: center; justify-content: center; flex: none; }
  .hbar { display: flex; width: 956px; height: 20px; border: solid #e1e3e6; border-width: 1px 0; background: #fff; }
  .hcorner { width: 35px; background: #f8f8f8; border-right: 1px solid #c7c9cc; }
  .htrack { width: 859px; padding-top: 2px; }
  .hthumb { height: 14px; border-radius: 7px; background: #dadce0; }
  .hthumb.a { margin-left: 76px; width: 512px; }
  .hthumb.b { margin-left: 64px; width: 491px; }
  .hbtn { width: 24px; border-left: 1px solid #e1e3e6; background: #f8f8f8; display: flex; align-items: center; justify-content: center; padding-right: 3px; }
  .hend { width: 14px; border-left: 2px solid #e1e3e6; background: #f8f8f8; }

  .stabs { display: flex; align-items: center; width: 956px; height: 53px; background: #f9fbfd; font: 500 20px Roboto, sans-serif; color: #444746; }
  .plus { width: 50px; margin-left: 67px; display: flex; justify-content: center; }
  .burger { width: 68px; display: flex; justify-content: center; }
  .stab { display: flex; align-items: center; height: 53px; letter-spacing: 1px; font-weight: 400; -webkit-text-stroke: 0.25px; flex: none; white-space: nowrap; }
  .stab .caret { width: 12px; height: 6px; margin-left: auto; }
  .stab.sel { background: #e1e9f7; color: #0b57d0; font-weight: 600; }
  .l1 { width: 128px; padding: 0 17px 0 32px; }
  .l2 { width: 119px; padding: 0 17px 0 18px; }
  .l3 { width: 117px; padding: 0 17px 0 18px; }
  .l4 { width: 114px; padding: 0 17px 0 18px; }
  .cut { width: 27px; padding-left: 18px; overflow: hidden; }
  .q1 { width: 116px; padding: 0 17px 0 18px; margin-left: 13px; }
  .q2 { width: 117px; padding: 0 17px 0 18px; }
  .q3 { width: 118px; padding: 0 17px 0 19px; }
  .cut.wide { width: 142px; padding-left: 19px; margin-right: -1px; }
  .tsep { width: 2px; height: 30px; background: #c7c9cc; }
  .tprev { width: 65px; display: flex; justify-content: center; }
  .tnext { width: 54px; display: flex; justify-content: center; }

  /* taskbar */
  .taskbar { display: flex; height: 69px; color: #fff; background: linear-gradient(to right, #222427 0, #242326 190px, #301c24 330px, #33202f 450px, #2d222c 540px, #222228 700px, #222227 1050px, #3b171b 1120px, #43161a 1180px, #38181d 1230px, #222226 1400px, #2a2025 1580px, #301e26 1750px, #431829 1915px); }
  .weather { display: flex; width: 397px; padding: 9px 0 0 27px; }
  .wicon { position: relative; width: 40px; }
  .wicon b { position: absolute; left: 19px; top: -2px; width: 24px; height: 24px; border-radius: 50%; background: #ff99a4; color: #222; font: 15px/24px 'Open Sans', sans-serif; text-align: center; }
  .wtext { display: flex; flex-direction: column; margin: 0 0 0 9px; font-size: 17.300px; line-height: 24px; letter-spacing: -0.1px; }
  .wtext .sub { color: #c3c3c3; }
  .apps { display: flex; align-items: center; width: 1036px; padding-bottom: 1px; }
  .app { width: 66px; height: 60px; display: flex; align-items: center; justify-content: center; position: relative; }
  .start { width: 74px; }
  .search { display: flex; align-items: center; width: 329px; height: 48px; border-radius: 24px; padding: 0 7px 0 17px; background: rgba(255, 255, 255, 0.13); border: 1px solid rgba(255, 255, 255, 0.12); font-size: 19.200px; color: #d0d0d0; }
  .search span { margin: -2px 0 0 14px; }
  .search .mosque { margin-left: auto; }
  .search + .app { margin-left: 4px; }
  .logo { width: 36px; height: 36px; }
  .ind { position: absolute; bottom: 2px; left: 29px; width: 9px; height: 5px; border-radius: 3px; background: #9b9b9d; }
  .ind.hot { left: 21px; width: 24px; background: #f47c60; }
  .wa b { position: absolute; left: 26px; top: 5px; width: 40px; height: 24px; border-radius: 9px; background: #f47c60; color: #1b1b1b; font: 16.500px/23px 'Open Sans', sans-serif; text-align: center; letter-spacing: -0.3px; }
  .who { position: absolute; left: 36px; top: 5px; width: 23px; height: 23px; border-radius: 50%; background: #6f8693; font: 500 13px/23px Roboto, sans-serif; text-align: center; color: #dfe6ea; box-shadow: -2px 1px 0 #3f4d55; }
  .who.a { background: #465b67; }
  .cur::before { content: ''; position: absolute; left: 3px; top: 0; width: 53px; height: 60px; border-radius: 7px; background: rgba(255, 255, 255, 0.09); border: 1px solid rgba(255, 255, 255, 0.08); box-shadow: 6px 0 0 rgba(255, 255, 255, 0.05); }
  .cur .logo, .cur .who { z-index: 1; }
  .tray { display: flex; align-items: center; flex: 1; }
  .up { margin: 0 27px 0 2px; }
  .sync { margin: 0 27px 0 21px; }
  .eng { width: 62px; font-size: 17.500px; letter-spacing: -0.1px; margin-top: -1px; }
  .vol { margin: 0 10px 0 11px; }
  .clock { margin: -3px 0 0 auto; display: flex; flex-direction: column; align-items: flex-end; font-size: 17.500px; line-height: 24px; }
  .bell { margin: 0 26px 0 12px; }
</style>
